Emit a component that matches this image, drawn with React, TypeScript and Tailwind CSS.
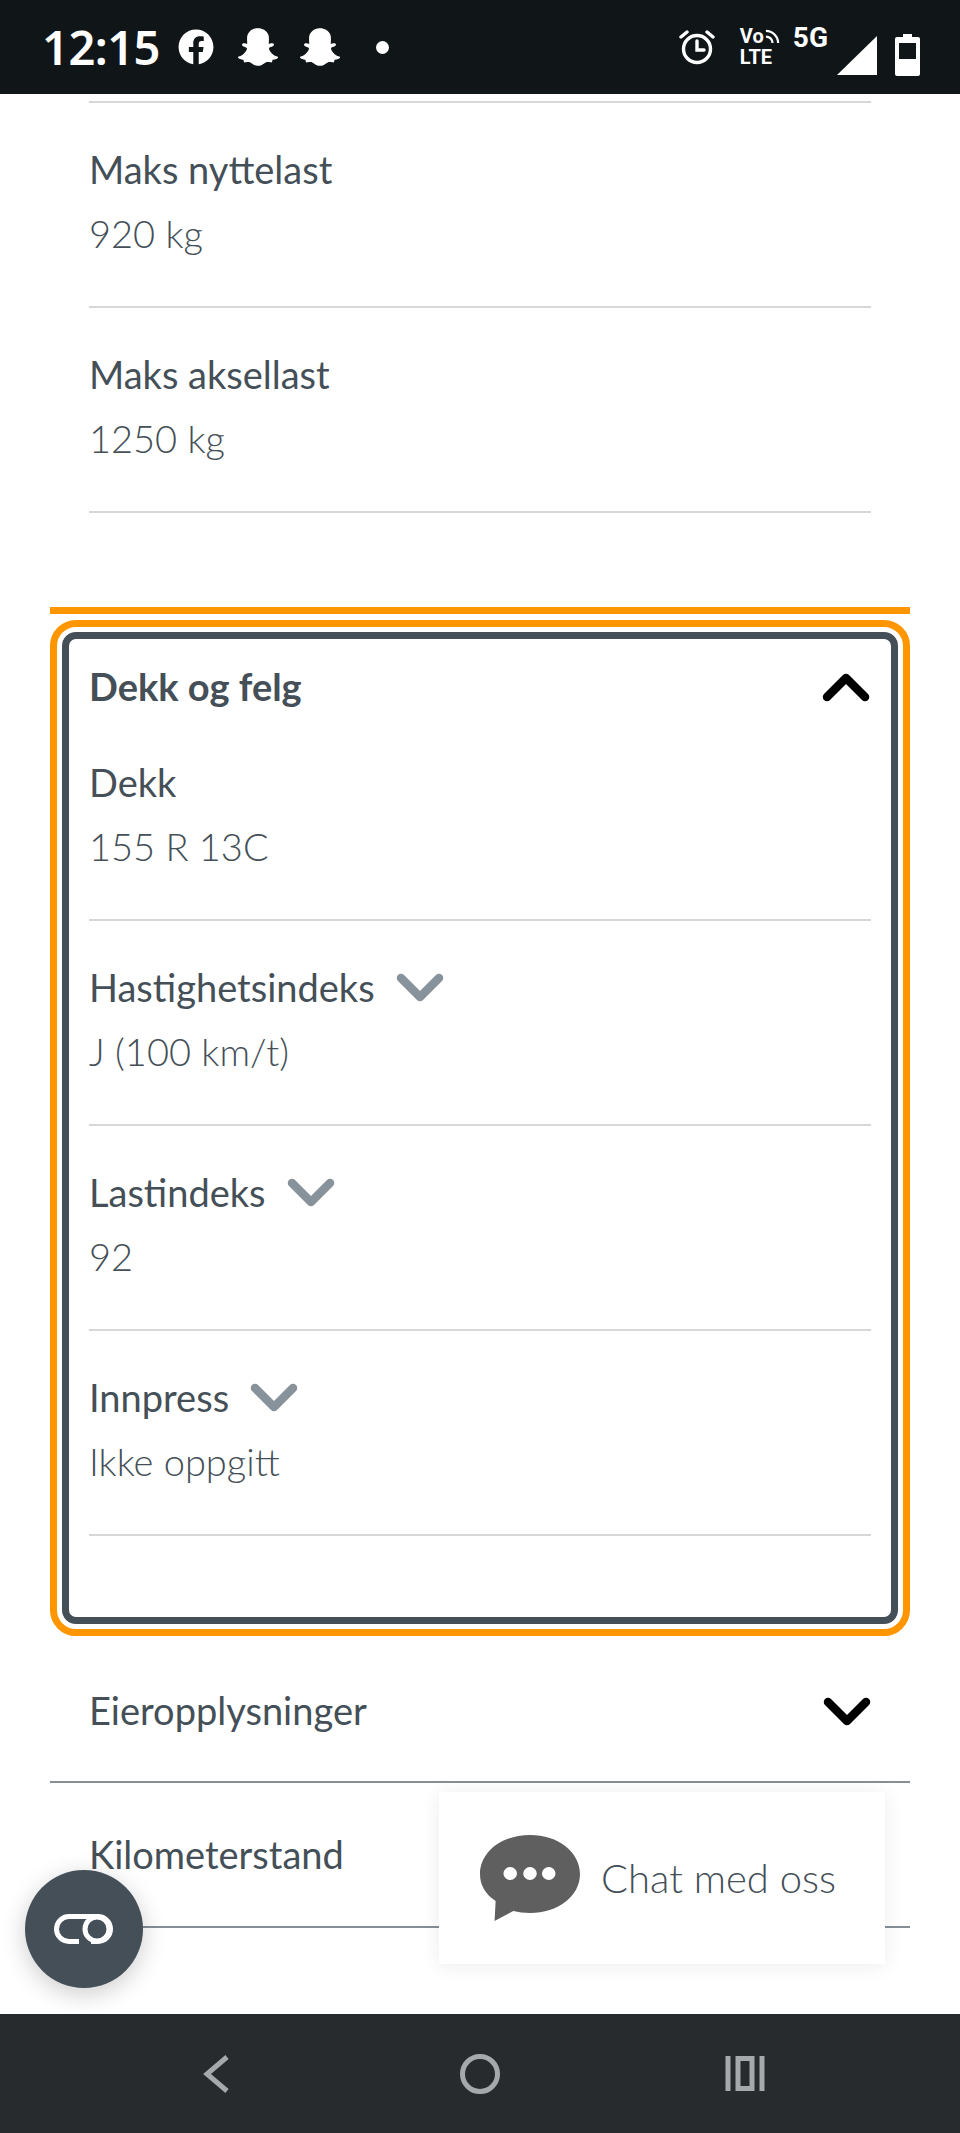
import { ReactNode } from 'react'
import { FaFacebook, FaSnapchatGhost } from 'react-icons/fa'

const FONT = "font-['Lato',sans-serif]"

function Chevron({ up, className }: { up?: boolean; className: string }) {
  return (
    <svg viewBox="0 0 48 30" className={className} fill="none" stroke="currentColor" strokeWidth="8.5" strokeLinecap="round" strokeLinejoin="round">
      <path d={up ? 'M5 25 L24 6 L43 25' : 'M5 5 L24 24 L43 5'} />
    </svg>
  )
}

function Spec({ label, value, help, first }: { label: string; value: string; help?: boolean; first?: boolean }) {
  return (
    <div className={`border-b-2 border-[#d6d8d8] ${first ? 'h-[188px] pt-[18px]' : 'h-[205px] pt-[35px]'}`}>
      <div className="flex h-[63px] items-center text-[38px] text-[#444f57]">
        {label}
        {help && <Chevron className="ml-[20px] h-[30px] w-[50px] text-[#87929a]" />}
      </div>
      <div className="flex h-[64px] items-center text-[38px] font-light text-[#444f57]">{value}</div>
    </div>
  )
}

function Fold({ title, height, children }: { title: string; height: string; children?: ReactNode }) {
  return (
    <div className={`flex items-center justify-between border-b-2 border-[#858f95] px-[39px] text-[38px] text-[#444f57] ${height}`}>
      {title}
      {children}
    </div>
  )
}

export default function App() {
  return (
    <div className={`relative flex h-[2133px] w-[960px] flex-col overflow-hidden bg-white ${FONT}`}>
      {/* status bar */}
      <div className="flex h-[94px] shrink-0 items-center bg-[#101518] pl-[42px] pr-[40px] text-white">
        <span className="w-[136px] font-['Noto_Sans',sans-serif] text-[47px] font-semibold leading-none tracking-[-0.5px]">12:15</span>
        <FaFacebook className="h-[36px] w-[36px]" />
        <FaSnapchatGhost className="ml-[24px] h-[40px] w-[40px]" />
        <FaSnapchatGhost className="ml-[22px] h-[40px] w-[40px]" />
        <div className="ml-[36px] h-[13px] w-[13px] rounded-full bg-white" />
        <div className="flex-1" />
        <svg viewBox="0 0 36 36" className="h-[36px] w-[36px]" fill="none" stroke="white" strokeWidth="3.4" strokeLinecap="round">
          <circle cx="18" cy="20" r="13.5" />
          <path d="M18 12 V21 H25" />
          <path d="M2 8 L8 3 M34 8 L28 3" />
        </svg>
        <div className="ml-[25px] flex w-[44px] flex-col text-[20px] font-bold leading-[21px]">
          <div className="flex items-center font-['Roboto',sans-serif]">
            Vo
            <svg viewBox="0 0 16 16" className="ml-[1px] h-[15px] w-[15px]" fill="none" stroke="white" strokeWidth="2.4">
              <path d="M1 2 C8 2 14 8 14 15 M1 8 C5 8 8 11 8 15" />
            </svg>
          </div>
          <span className="font-['Roboto',sans-serif]">LTE</span>
        </div>
        <span className="ml-[9px] -mt-[18px] font-['Roboto',sans-serif] text-[28px] font-bold leading-none">5G</span>
        <svg viewBox="0 0 40 39" className="ml-[9px] mt-[17px] h-[39px] w-[40px]">
          <path d="M40 0 V39 H0 Z" fill="white" />
        </svg>
        <svg viewBox="0 0 25 42" className="ml-[18px] mt-[16px] h-[42px] w-[25px]">
          <path fillRule="evenodd" fill="white" d="M8 0 H17 V3 H23 A2 2 0 0 1 25 5 V40 A2 2 0 0 1 23 42 H2 A2 2 0 0 1 0 40 V5 A2 2 0 0 1 2 3 H8 Z M4 9 V25 H21 V9 Z" />
        </svg>
      </div>

      {/* content */}
      <div className="flex-1 px-[50px] pt-[7px]">
        <div className="px-[39px]">
          <div className="border-b-2 border-[#d6d8d8]" />
          <Spec label="Maks nyttelast" value="920 kg" />
          <Spec label="Maks aksellast" value="1250 kg" />
        </div>

        <div className="mt-[94px] h-[7px] bg-[#ff9600]" />

        <div className="mt-[6px] rounded-[26px] border-[7px] border-[#ff9600] p-[5px]">
          <div className="h-[992px] rounded-[14px] border-[7px] border-[#444f57] px-[20px]">
            <div className="flex h-[94px] items-center justify-between text-[38px] font-bold text-[#444f57]">
              Dekk og felg
              <Chevron up className="mr-[1px] mt-[2px] h-[30px] w-[48px] text-black" />
            </div>
            <Spec first label="Dekk" value="155 R 13C" />
            <Spec help label="Hastighetsindeks" value="J (100 km/t)" />
            <Spec help label="Lastindeks" value="92" />
            <Spec help label="Innpress" value="Ikke oppgitt" />
          </div>
        </div>

        <Fold title="Eieropplysninger" height="h-[147px] pt-[3px]">
          <Chevron className="mt-[3px] h-[30px] w-[48px] text-black" />
        </Fold>
        <Fold title="Kilometerstand" height="h-[145px]" />
      </div>

      {/* floating toggle button */}
      <div className="absolute left-[25px] top-[1870px] flex h-[118px] w-[118px] items-center justify-center rounded-full bg-[#444f57] shadow-[0_6px_24px_rgba(0,0,0,0.2)]">
        <svg viewBox="0 0 62 32" className="h-[32px] w-[62px]" fill="none" stroke="white" strokeWidth="5">
          <path d="M26 28.5 H16 A12.500 12.500 0 0 1 16 3.500 H45 A12.500 12.500 0 0 1 45 28.500 H38" />
          <circle cx="44" cy="16" r="12" />
        </svg>
      </div>

      {/* chat card */}
      <div className="absolute left-[439px] top-[1792px] flex h-[172px] w-[446px] items-center bg-white pl-[41px] shadow-[0_2px_18px_rgba(0,0,0,0.08)]">
        <svg viewBox="0 0 96 86" className="h-[86px] w-[100px]" preserveAspectRatio="none">
          <path fill="#5f5f5f" d="M48 0 C75 0 96 17 96 39 C96 61 75 78 48 78 C42 78 37 77 32 76 L14 86 L15 66 C5 59 0 50 0 39 C0 17 21 0 48 0 Z" />
          <ellipse cx="29" cy="38.500" rx="6.500" ry="6.500" fill="white" />
          <ellipse cx="48" cy="38.500" rx="6.500" ry="6.500" fill="white" />
          <ellipse cx="66" cy="38.500" rx="6.500" ry="6.500" fill="white" />
        </svg>
        <span className="ml-[21px] text-[40px] font-light text-[#444f57]">Chat med oss</span>
      </div>

      {/* android nav */}
      <div className="flex h-[119px] shrink-0 items-center bg-[#272b2e]">
        <svg viewBox="0 0 26 38" className="ml-[203px] h-[38px] w-[26px]" fill="none" stroke="#a6a9ac" strokeWidth="5">
          <path d="M24 2 L4 19 L24 36" />
        </svg>
        <div className="ml-[231px] h-[40px] w-[40px] rounded-full border-[5px] border-[#a6a9ac]" />
        <svg viewBox="0 0 39 35" className="ml-[225px] h-[35px] w-[40px]" fill="#a6a9ac">
          <path fillRule="evenodd" d="M0 0 H5 V35 H0 Z M34 0 H39 V35 H34 Z M10 0 H29 V35 H10 Z M15 5 V30 H24 V5 Z" />
        </svg>
      </div>
    </div>
  )
}
